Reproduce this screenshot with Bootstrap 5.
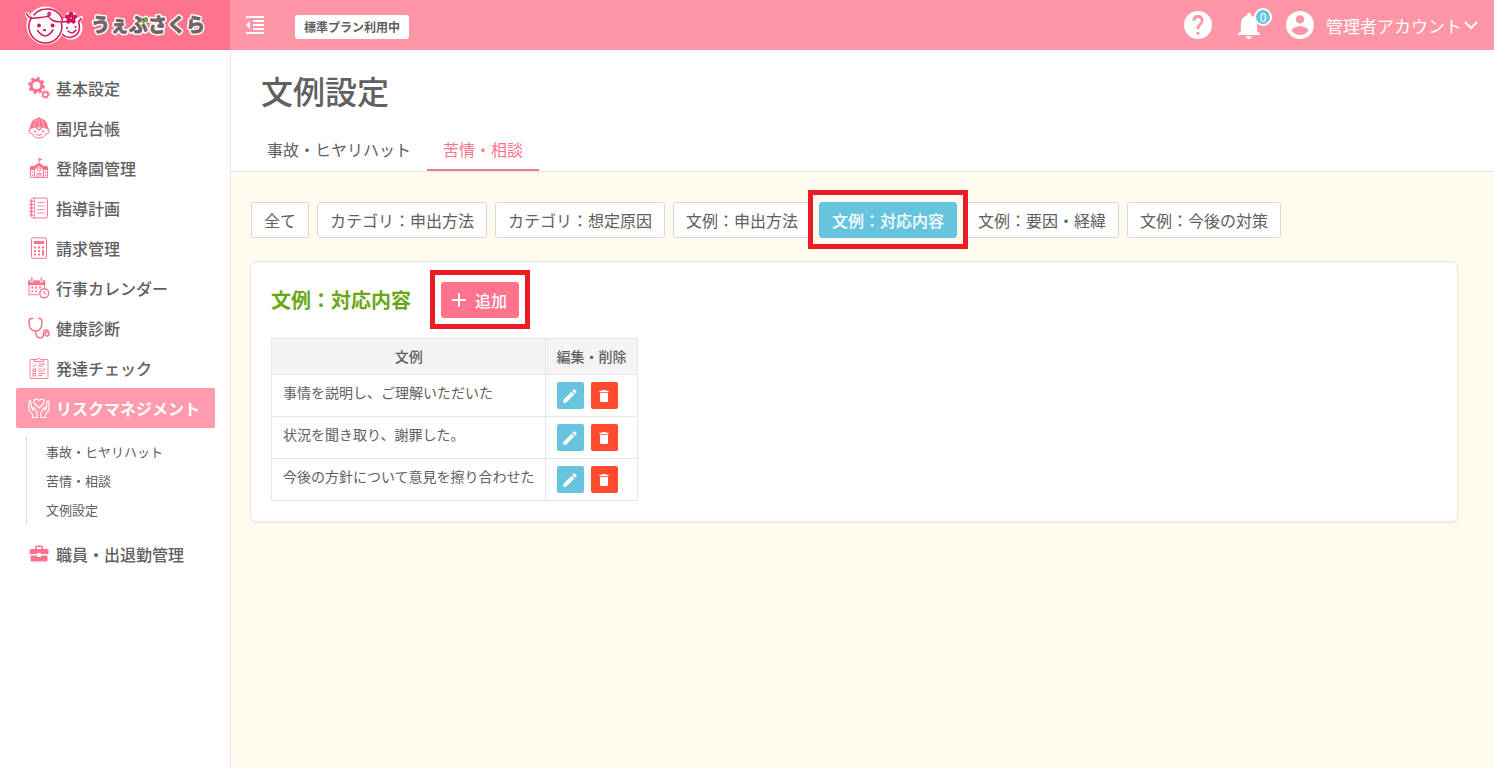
<!DOCTYPE html>
<html lang="ja">
<head>
<meta charset="utf-8">
<meta name="viewport" content="width=device-width, initial-scale=1">
<title>文例設定 | うぇぶさくら</title>
<link href="https://cdn.jsdelivr.net/npm/bootstrap@5.3.0/dist/css/bootstrap.min.css" rel="stylesheet">
<style>
:root { --pink: #ff738c; --pink-soft: #ff96a8; --sky: #67c4de; --ink: #606060; --line: #e6e6e6; --cream: #fffbee; }
body { font-family: "Noto Sans CJK JP", sans-serif; font-size: 16px; line-height: 24px; color: var(--ink); background: #fff; }
svg { flex: none; display: block; }
.topbar { height: 50px; background: var(--pink-soft); color: #fff; }
.brand-box { width: 230px; height: 50px; background: var(--pink); padding-left: 24px; }
.brand-word { font-weight: 700; font-size: 19px; }
.menu-toggle { margin-left: 15px; }
.plan-tag { margin-left: 30px; padding: 0 9px; line-height: 24px; font-size: 12px; font-weight: 700; background: #fff; color: var(--ink); border-radius: 3px; }
.head-tools { padding-right: 16px; gap: 26px; }
.count-tag { top: -4px; right: -12px; width: 18px; height: 18px; border: 2px solid #fff; border-radius: 50%; background: var(--sky); font-size: 12px; line-height: 14px; text-align: center; }
.account { font-size: 17px; color: #fff; }
.account span { margin: 2px 2px 0 12px; }
.side { width: 231px; flex: none; padding: 18px 15px 0 16px; border-right: 1px solid var(--line); }
.side-link { display: flex; align-items: center; gap: 6px; height: 40px; padding: 0 12px; font-weight: 500; color: var(--ink); text-decoration: none; white-space: nowrap; border-radius: 2px; }
.side-link svg { color: var(--pink); }
.side-link.current { background: #ff9bac; color: #fff; font-weight: 700; }
.side-link.current svg { color: #fff; }
.side-sub { margin: 9px 0 10px 10px; padding-left: 19px; border-left: 1px solid #ddd; font-size: 13px; }
.side-sub a { display: block; line-height: 29px; color: var(--ink); text-decoration: none; }
.page-main { background: var(--cream); min-height: calc(100vh - 50px); min-width: 0; }
.page-head { background: #fff; border-bottom: 1px solid var(--line); padding: 16px 20px 0; }
.page-head h1 { font-size: 32px; line-height: 48px; font-weight: 500; margin: 0 0 15px 10px; color: var(--ink); }
.tab-link { padding: 8px 16px; color: var(--ink); text-decoration: none; border-bottom: 2px solid transparent; }
.tab-link.current { color: var(--pink); border-color: #e0808f; }
.content { padding: 30px 36px 30px 19px; }
.filters { margin-left: 1px; }
.filter { --bs-btn-padding-x: 12px; --bs-btn-padding-y: 5px; --bs-btn-line-height: 24px; --bs-btn-border-radius: 3px; --bs-btn-color: #606060; --bs-btn-bg: #fff; --bs-btn-border-color: #d9d9d9; --bs-btn-hover-color: #606060; --bs-btn-hover-bg: #f7f7f7; --bs-btn-active-color: #fff; --bs-btn-active-bg: #67c4de; --bs-btn-active-border-color: #67c4de; }
.filter.active { font-weight: 500; }
.marked { position: relative; }
.marked::after { content: ""; position: absolute; inset: -12px -11px -11px; border: 5px solid #e91c24; pointer-events: none; z-index: 1; }
.panel { background: #fff; border: 1px solid #ebe8df; border-radius: 6px; box-shadow: 0 1px 2px rgba(0,0,0,.08); margin-top: 23px; padding: 20px; }
.panel-head { gap: 30px; }
.panel h2 { font-size: 20px; line-height: 36px; font-weight: 700; color: #69a716; margin: 0; }
.add-btn { --bs-btn-padding-x: 12px; --bs-btn-padding-y: 6px; --bs-btn-line-height: 24px; --bs-btn-border-width: 0; --bs-btn-border-radius: 3px; --bs-btn-color: #fff; --bs-btn-bg: #ff738c; --bs-btn-hover-color: #fff; --bs-btn-hover-bg: #f5637d; --bs-btn-font-weight: 500; padding-left: 10px; gap: 8px; }
.examples { width: auto; margin: 20px 0 0; font-size: 14px; line-height: 21px; color: var(--ink); border-color: var(--line); }
.examples > :not(caption) > * > * { padding: 7px 10px 7px 11px; color: var(--ink); }
.examples th { font-weight: 500; text-align: center; }
.examples thead > tr > th { background: #f4f4f4; }
.tools { gap: 7px; }
.tool { width: 27px; height: 27px; border: 0; border-radius: 2px; padding: 0; display: flex; align-items: center; justify-content: center; color: #fff; background: var(--sky); }
.tool.del { background: #ff4b2d; }
</style>
</head>
<body>
<svg width="0" height="0" class="position-absolute" aria-hidden="true">
  <symbol id="pen" viewBox="0 0 24 24"><path fill="currentColor" d="M3 17.25V21h3.75L17.8 9.94l-3.75-3.75zM20.7 7.04a1 1 0 0 0 0-1.41l-2.33-2.34a1 1 0 0 0-1.41 0l-1.9 1.9 3.75 3.75z"/></symbol>
  <symbol id="bin" viewBox="0 0 24 24"><path fill="currentColor" d="M6 19c0 1.100.9 2 2 2h8c1.100 0 2-.9 2-2V7H6zM19 4h-3.500l-1-1h-5l-1 1H5v2h14z"/></symbol>
</svg>

<header class="topbar d-flex align-items-center">
  <a href="#" class="brand-box d-flex align-items-center flex-shrink-0" aria-label="うぇぶさくら">
    <svg width="186" height="46" viewBox="24 2 186 46">
      <g stroke-linecap="round" stroke-linejoin="round">
        <g fill="#fff" stroke="#fff" stroke-width="4"><circle cx="45.500" cy="25.500" r="17"/><circle cx="71" cy="28" r="9.500"/><circle cx="71" cy="18" r="4.500"/><path d="M27 14q2 6 8 4M77 21l4-3" fill="none"/></g>
        <g fill="none" stroke="#d4145a" stroke-width="1.500">
          <path d="M26.500 13.500q2 5.500 9 4.500c6-.8 12-.5 14.500-3 1.500-3-2.500-3.500-2-.5.8 5 7 8 13 7"/>
          <path d="M31.500 17.500A16.500 16.500 0 1 0 61.500 23C64 19 59 9 47 9 41 9 37 11 34 15"/>
          <path d="M63 22l4-.5M62.500 34.500c5.500 5.500 16.500 3 17-7 0-2-.5-4-1-5.500l2.500-3.500"/>
          <path d="M37.500 30.500q8 11 15.500-.5M43.500 30.500q1-2 2 0M68 31q4 4 8-1"/>
        </g>
        <g fill="#d4145a"><circle cx="39" cy="25.500" r="1.900"/><circle cx="52.500" cy="25.500" r="1.900"/><circle cx="67" cy="28" r="1.100"/><circle cx="75.500" cy="27" r="1.100"/>
          <g id="petals"><ellipse cx="71" cy="14.500" rx="2.300" ry="2.900"/><ellipse cx="71" cy="14.500" rx="2.300" ry="2.900" transform="rotate(72 71 18)"/><ellipse cx="71" cy="14.500" rx="2.300" ry="2.900" transform="rotate(144 71 18)"/><ellipse cx="71" cy="14.500" rx="2.300" ry="2.900" transform="rotate(216 71 18)"/><ellipse cx="71" cy="14.500" rx="2.300" ry="2.900" transform="rotate(288 71 18)"/></g></g>
        <text class="brand-word" x="91" y="32" fill="#fff" stroke="#fff" stroke-width="4">うぇぶさくら</text>
        <text class="brand-word" x="91" y="32" fill="#6f6565" stroke="#6f6565" stroke-width="1">うぇぶさくら</text>
        <path d="M142 20.500l1.500 2.500M145 19l1.500 2.500" stroke="#6fba2c" stroke-width="2.200"/>
      </g>
    </svg>
  </a>
  <button type="button" class="menu-toggle btn p-0 border-0" aria-label="メニューを閉じる">
    <svg width="20" height="20" viewBox="0 0 20 20" fill="#fff"><path d="M1 1h18v2H1zM8 5h11v2H8zM8 9h11v2H8zM8 13h11v2H8zM1 17h18v2H1zM1 10l4-4v8z"/></svg>
  </button>
  <span class="plan-tag mt-1">標準プラン利用中</span>
  <div class="head-tools ms-auto d-flex align-items-center">
    <a href="#" aria-label="ヘルプ"><svg width="28" height="28" viewBox="2 2 20 20" fill="#fff"><path d="M12 2a10 10 0 1 0 0 20 10 10 0 0 0 0-20zm1 17h-2v-2h2zm2.070-7.750-.9.920C13.450 12.900 13 13.500 13 15h-2v-.5c0-1.100.45-2.100 1.170-2.830l1.240-1.260A2 2 0 1 0 10 9H8a4 4 0 1 1 7.070 2.250z"/></svg></a>
    <a href="#" class="position-relative text-white text-decoration-none" aria-label="お知らせ">
      <svg width="22" height="27" viewBox="4 2 16 20" fill="#fff"><path d="M12 22c1.100 0 2-.9 2-2h-4a2 2 0 0 0 2 2zm6-6v-5c0-3.070-1.640-5.640-4.500-6.320V4a1.500 1.500 0 0 0-3 0v.68C7.630 5.360 6 7.920 6 11v5l-2 2v1h16v-1z"/></svg>
      <span class="count-tag position-absolute">0</span>
    </a>
    <a href="#" class="account d-flex align-items-center text-decoration-none">
      <svg width="28" height="28" viewBox="2 2 20 20" fill="#fff"><path d="M12 2a10 10 0 1 0 0 20 10 10 0 0 0 0-20zm0 3a3 3 0 1 1 0 6 3 3 0 0 1 0-6zm0 14.200A7.200 7.200 0 0 1 6 15.980c.03-1.990 4-3.080 6-3.080s5.970 1.090 6 3.080a7.200 7.200 0 0 1-6 3.220z"/></svg>
      <span>管理者アカウント</span>
      <svg width="14" height="10" viewBox="0 0 14 10" fill="none" stroke="#fff" stroke-width="2"><path d="M1 2l6 6 6-6"/></svg>
    </a>
  </div>
</header>

<div class="d-flex">
  <nav class="side" aria-label="メインメニュー">
    <a class="side-link" href="#"><svg width="22" height="22" viewBox="0 0 22 22" fill="none" stroke="currentColor"><circle cx="8.500" cy="8.500" r="5.300" stroke-width="3"/><circle cx="8.500" cy="8.500" r="7.300" stroke-width="2.400" stroke-dasharray="3 2.730"/><circle cx="17.500" cy="17.500" r="2.500" stroke-width="1.600"/><circle cx="17.500" cy="17.500" r="3.700" stroke-width="1.300" stroke-dasharray="1.600 1.300"/></svg>基本設定</a>
    <a class="side-link" href="#"><svg width="22" height="22" viewBox="0 0 22 22" fill="none" stroke="currentColor"><path fill="currentColor" stroke="none" d="M10 1a1 1 0 0 1 2 0q7 1 8 9.500 1 .8 1.500 2-10.500-4-21 0Q1 11.300 2 10.500 3 2 10 1z"/><path d="M11 2v8M8.500 2.500Q6 5 6 10.500M13.500 2.500Q16 5 16 10.500" stroke="#fff" stroke-width=".5"/><path d="M3 13q-3-.5-2 2t3 1.500q2 4.500 7 4.500t7-4.500q2 1 3-1.500t-2-2M8 17q3 3 6 0"/><circle cx="7" cy="14.500" r=".7" fill="currentColor"/><circle cx="15" cy="14.500" r=".7" fill="currentColor"/><path d="M8.500 11l2.500 2 2.500-2" stroke-width="1.300"/></svg>園児台帳</a>
    <a class="side-link" href="#"><svg width="22" height="22" viewBox="0 0 22 22" fill="none" stroke="currentColor"><path fill="currentColor" stroke="none" d="M10.500 1h1l3 1.500-3 1.300V6l4.500 3h3.500l1 4h-5l-4.500-4-4.500 4h-5l1-4H6l4.500-3z"/><path d="M2.500 13v7.500h17V13M6.500 12v8M15.500 12v8M9 20.500v-4h4v4M11 16.500v4" stroke-width=".9"/><circle cx="11" cy="12.500" r="1.700"/><path d="M4.500 14.500v1.500M17.500 14.500v1.500M4.500 17.500v1.500M17.500 17.500v1.500" stroke-width="1.400"/></svg>登降園管理</a>
    <a class="side-link" href="#"><svg width="22" height="22" viewBox="0 0 22 22" fill="none" stroke="currentColor"><rect x="3.500" y="1" width="16" height="20" rx="1.500"/><path d="M6.500 1v20M9 5.500h8M9 9h8M9 12.500h8M9 16h8" stroke-width=".8"/><path d="M1.500 4h4M1.500 7.500h4M1.500 11h4M1.500 14.500h4M1.500 18h4" stroke-width="1.500"/></svg>指導計画</a>
    <a class="side-link" href="#"><svg width="22" height="22" viewBox="0 0 22 22" fill="none" stroke="currentColor"><rect x="3.500" y=".8" width="15" height="20.500" rx="1.500"/><path d="M6 5.500h10" stroke-width="3"/><path d="M6 10.500h2m2 0h2M6 14h2m2 0h2M6 17.500h2m2 0h2M14 10.500h2M14 14h2" stroke-width="2"/><path d="M15 13v5.500" stroke-width="2"/></svg>請求管理</a>
    <a class="side-link" href="#"><svg width="22" height="22" viewBox="0 0 23 22" fill="none" stroke="currentColor"><path fill="currentColor" stroke="none" d="M0 3h18v5H0z"/><path d="M4 0v5M14 0v5" stroke="#fff" stroke-width="3"/><path d="M4 0v4M14 0v4" stroke-width="1.500"/><path d="M1 7v11h10M17.300 7v4"/><path d="M3.500 10.500h2m2 0h2m2 0h2M3.500 14.500h2m2 0h2" stroke-width="2"/><circle cx="17" cy="16.500" r="4.700" stroke-width="1.400"/><path d="M17 14v3h2.500"/></svg>行事カレンダー</a>
    <a class="side-link" href="#"><svg width="22" height="22" viewBox="0 0 22 22" fill="none" stroke="currentColor" stroke-width="1.500" stroke-linecap="round"><path d="M4.500 1.500H3Q1 1.500 1 5q0 9 6.500 9T14 5q0-3.500-2-3.500h-1.500"/><path d="M7.500 14q0 7 5 7c5 0 1.500-6.500 4-7.500 3-1.300 4 .5 4 2"/><circle cx="19" cy="17" r="2"/></svg>健康診断</a>
    <a class="side-link" href="#"><svg width="22" height="22" viewBox="0 0 22 22" fill="none" stroke="currentColor" stroke-width=".9"><rect x="2" y="2.500" width="18" height="19" rx="1"/><path d="M6.500 4.500v-2h2.800q1.700-3 3.400 0h2.800v2z" fill="#fff"/><rect x="5" y="12" width="2.500" height="2.500"/><rect x="5" y="16.500" width="2.500" height="2.500"/><path d="M4.500 8.500l1.300 1.300 2.400-3M10.500 7h7M10.500 9h5M10.500 12h3m1.500 0h2.500M10.500 14h6M10.500 16.500h7M10.500 18.500h4"/></svg>発達チェック</a>
    <a class="side-link current" href="#" aria-current="true"><svg width="22" height="22" viewBox="0 0 22 22" fill="none" stroke="currentColor" stroke-width="1.100" stroke-linejoin="round"><path d="M11 11L6.500 6.500C4 3 8.500.5 11 3.500 13.500.5 18 3 15.500 6.500z"/><path d="M4.500 20.500v-3L1 13V4.500q1.500-1.500 2 .5l.5 6 2 2.500-1-2.500q1.500-1 2.500 1l2 3.500v5zM17.500 20.500v-3L21 13V4.500q-1.500-1.500-2 .5l-.5 6-2 2.500 1-2.500q-1.500-1-2.500 1l-2 3.500v5z"/></svg>リスクマネジメント</a>
    <div class="side-sub">
      <a href="#">事故・ヒヤリハット</a>
      <a href="#">苦情・相談</a>
      <a href="#">文例設定</a>
    </div>
    <a class="side-link" href="#"><svg width="22" height="22" viewBox="0 0 22 22" fill="currentColor"><path d="M7 6V4q0-1.500 1.500-1.500h5Q15 2.500 15 4v2h4q1.500 0 1.500 1.500V11H13v-1H9v1H1.500V7.500Q1.500 6 3 6zm1.500 0h5V4h-5zM2.500 12.500H9v1.500h4v-1.500h6.500V17q0 1.500-1.500 1.500H4Q2.500 18.500 2.500 17z"/></svg>職員・出退勤管理</a>
  </nav>

  <main class="page-main flex-grow-1">
    <div class="page-head">
      <h1>文例設定</h1>
      <nav class="d-flex" aria-label="種別">
        <a class="tab-link" href="#">事故・ヒヤリハット</a>
        <a class="tab-link current" href="#" aria-current="page">苦情・相談</a>
      </nav>
    </div>
    <div class="content">
      <div class="filters d-flex flex-wrap gap-2">
        <button type="button" class="btn filter">全て</button>
        <button type="button" class="btn filter">カテゴリ：申出方法</button>
        <button type="button" class="btn filter">カテゴリ：想定原因</button>
        <button type="button" class="btn filter">文例：申出方法</button>
        <div class="marked"><button type="button" class="btn filter active" aria-pressed="true">文例：対応内容</button></div>
        <button type="button" class="btn filter">文例：要因・経緯</button>
        <button type="button" class="btn filter">文例：今後の対策</button>
      </div>
      <section class="panel">
        <div class="panel-head d-flex align-items-center">
          <h2>文例：対応内容</h2>
          <div class="marked"><button type="button" class="btn add-btn d-flex align-items-center"><svg width="16" height="16" viewBox="0 0 16 16" stroke="#fff" stroke-width="2"><path d="M8 1v14M1 8h14"/></svg>追加</button></div>
        </div>
        <table class="table table-bordered examples">
          <thead><tr><th scope="col">文例</th><th scope="col">編集・削除</th></tr></thead>
          <tbody>
            <tr><td>事情を説明し、ご理解いただいた</td><td><div class="d-flex tools"><button type="button" class="tool" aria-label="編集"><svg width="18" height="18"><use href="#pen"/></svg></button><button type="button" class="tool del" aria-label="削除"><svg width="16" height="16"><use href="#bin"/></svg></button></div></td></tr>
            <tr><td>状況を聞き取り、謝罪した。</td><td><div class="d-flex tools"><button type="button" class="tool" aria-label="編集"><svg width="18" height="18"><use href="#pen"/></svg></button><button type="button" class="tool del" aria-label="削除"><svg width="16" height="16"><use href="#bin"/></svg></button></div></td></tr>
            <tr><td>今後の方針について意見を擦り合わせた</td><td><div class="d-flex tools"><button type="button" class="tool" aria-label="編集"><svg width="18" height="18"><use href="#pen"/></svg></button><button type="button" class="tool del" aria-label="削除"><svg width="16" height="16"><use href="#bin"/></svg></button></div></td></tr>
          </tbody>
        </table>
      </section>
    </div>
  </main>
</div>
<script src="https://cdn.jsdelivr.net/npm/bootstrap@5.3.0/dist/js/bootstrap.bundle.min.js"></script>
</body>
</html>
